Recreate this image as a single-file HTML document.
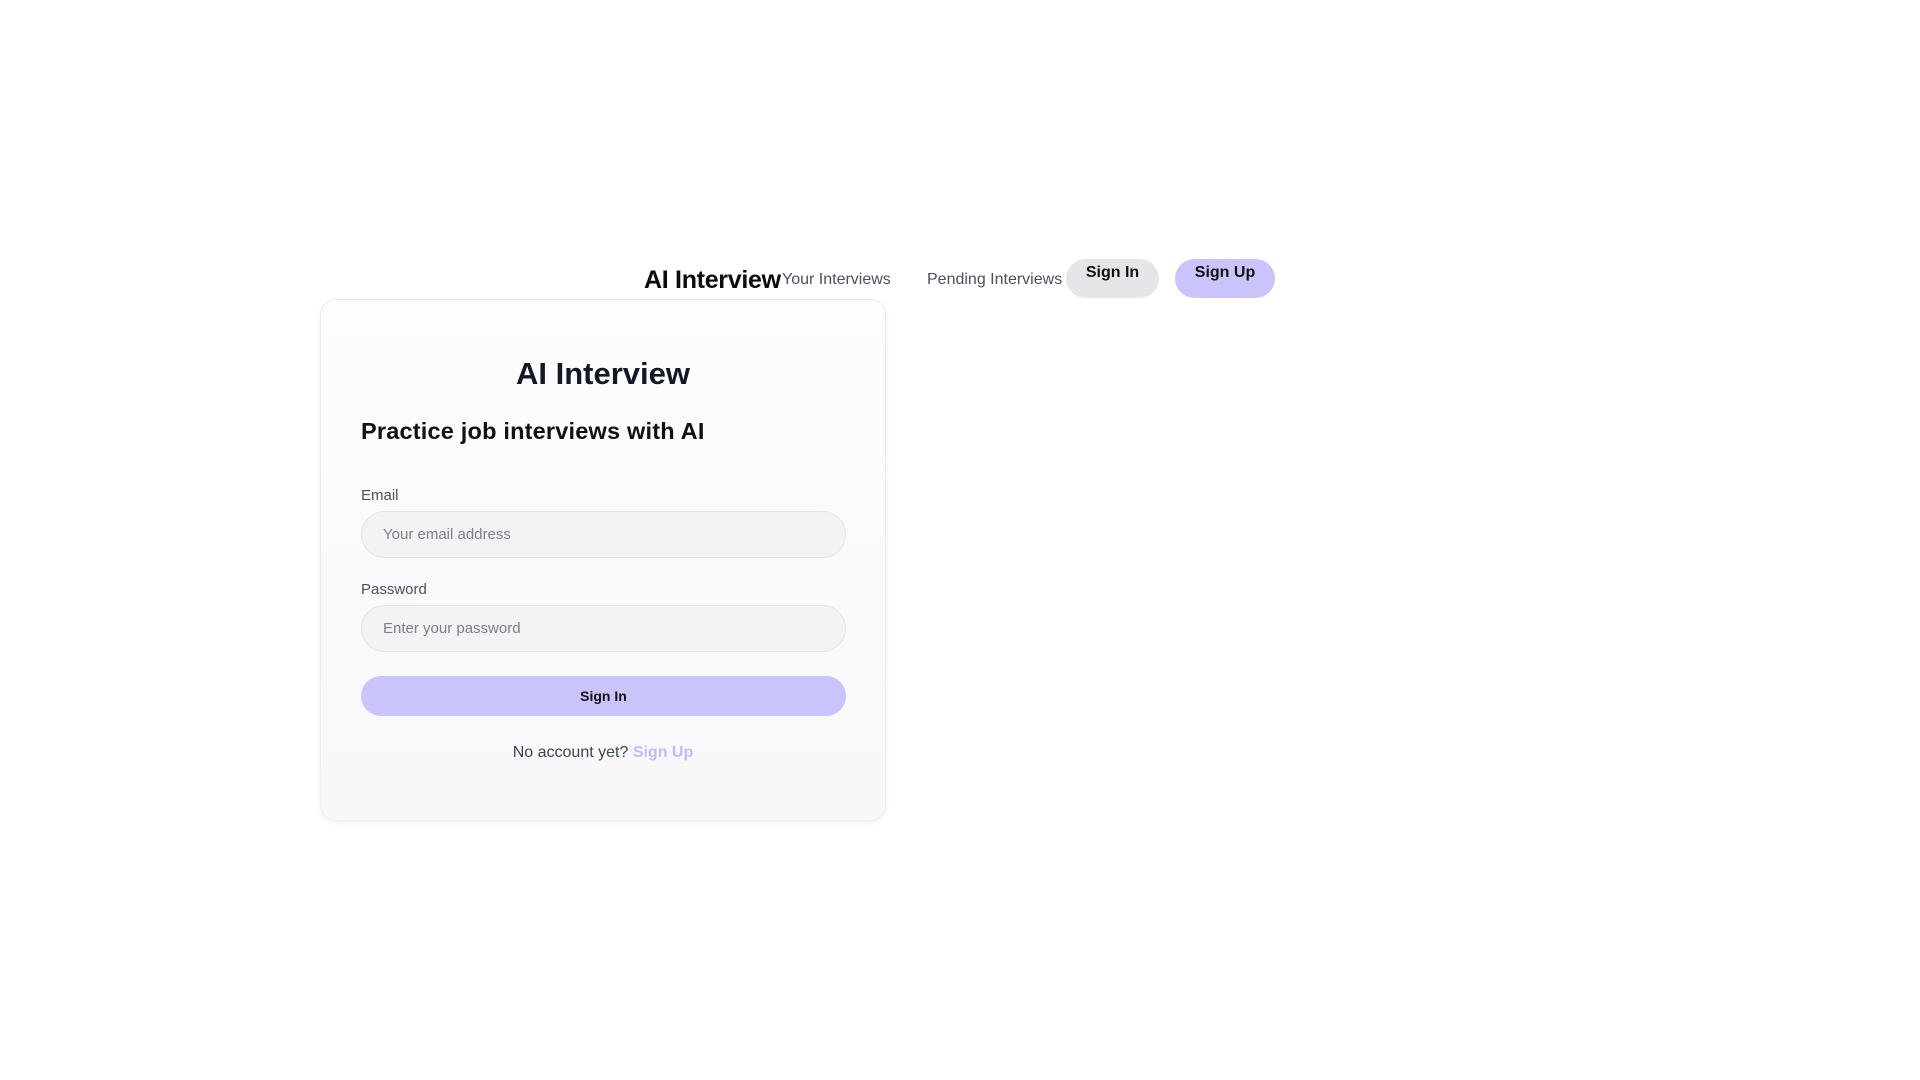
<!DOCTYPE html>
<html><head><meta charset="utf-8"><style>
*{box-sizing:border-box;margin:0;padding:0}
body{width:1920px;height:1080px;background:#fff;font-family:"Liberation Sans",sans-serif;position:relative;overflow:hidden;color:#111827}
.a{position:absolute;white-space:nowrap}
.card{position:absolute;left:320px;top:299px;width:566px;height:522px;border:1px solid #ececef;border-radius:16px;background:linear-gradient(#fdfdfd,#f7f8fa);box-shadow:0 2px 6px rgba(0,0,0,.06)}
.inp{position:absolute;left:361px;width:485px;height:47px;border:1px solid #e3e4e8;border-radius:24px;background:#f2f3f5;color:#7b7f88;font-size:15px;padding-left:21px;line-height:45px}
.lbl{font-size:15px;color:#4b5060}
.btn{position:absolute;border-radius:20px;font-weight:bold;font-size:16px;text-align:center;color:#111}
</style></head><body>
<div class="a" style="left:644px;top:266px;font-size:25px;font-weight:bold;letter-spacing:-0.3px;color:#0b0b0b">AI Interview</div>
<div class="a" style="left:782px;top:271px;font-size:16px;color:#4b5060">Your Interviews</div>
<div class="a" style="left:927px;top:271px;font-size:16px;color:#4b5060">Pending Interviews</div>
<div class="btn" style="left:1066px;top:259px;width:93px;height:39px;background:#e5e6ea;padding-top:5px">Sign In</div>
<div class="btn" style="left:1175px;top:259px;width:100px;height:39px;background:#c9c4fc;padding-top:5px">Sign Up</div>
<div class="card"></div>
<div class="a" style="left:320px;width:566px;text-align:center;top:356px;font-size:31px;font-weight:bold;color:#111827">AI Interview</div>
<div class="a" style="left:361px;top:418px;font-size:23.5px;font-weight:bold;letter-spacing:0.2px;color:#111">Practice job interviews with AI</div>
<div class="a lbl" style="left:361px;top:487px">Email</div>
<div class="inp" style="top:511px">Your email address</div>
<div class="a lbl" style="left:361px;top:581px">Password</div>
<div class="inp" style="top:605px">Enter your password</div>
<div class="btn" style="left:361px;top:676px;width:485px;height:40px;background:#c9c4fc;font-size:14px;line-height:40px">Sign In</div>
<div class="a" style="left:320px;width:566px;text-align:center;top:744px;font-size:16px;color:#3f4350">No account yet? <b style="color:#c2bbfb">Sign Up</b></div>
</body></html>
